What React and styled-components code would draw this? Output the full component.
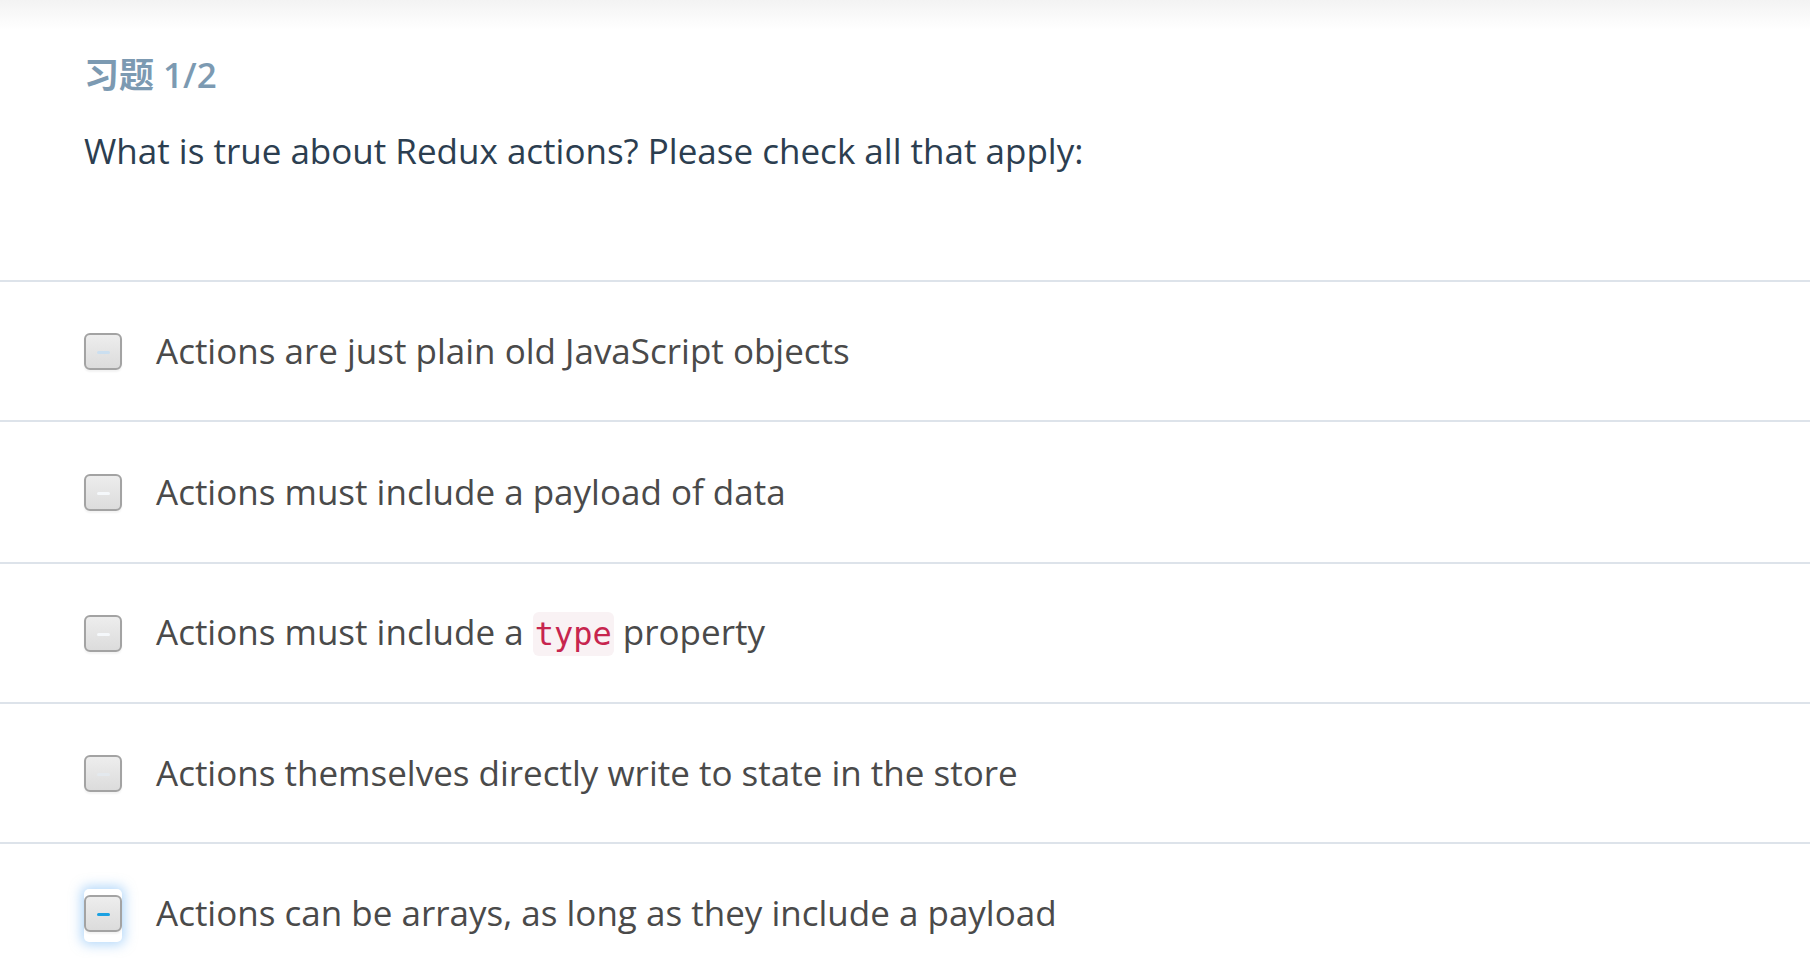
import React from "react";
import styled, { createGlobalStyle } from "styled-components";

const Global = createGlobalStyle`
  html, body { margin: 0; padding: 0; background: #ffffff; }
  body { font-family: "Open Sans", "Noto Sans CJK SC", sans-serif; overflow: hidden; }
`;

const Page = styled.div`
  width: 1810px;
  height: 958px;
  overflow: hidden;
  background: #fff;
`;

const TopShade = styled.div`
  height: 30px;
  background: linear-gradient(#f3f3f3, #ffffff);
`;

const Header = styled.header`
  padding: 25px 0 105px 84px;
`;

const Title = styled.h2`
  margin: 0;
  font-family: "Open Sans", "Noto Sans CJK SC", sans-serif;
  font-size: 35px;
  line-height: 40px;
  font-weight: 600;
  color: #7c9ab2;
`;

const Question = styled.p`
  margin: 32px 0 0;
  font-size: 35px;
  line-height: 48px;
  color: #2c3e50;
  font-weight: 400;
`;

const List = styled.ul`
  list-style: none;
  margin: 0;
  padding: 0;
`;

const Row = styled.li`
  height: ${(p) => p.$h - 2}px;
  border-top: 2px solid #dde3ea;
  display: flex;
  align-items: center;
  padding-left: 84px;
  gap: 34px;
`;

const Focus = styled.span`
  display: inline-flex;
  padding: 6px 0 10px;
  margin: -6px 0 -10px;
  border-radius: 5px;
  background: #fff;
  box-shadow: 0 0 12px 3px rgba(110, 180, 245, 0.5);
`;

const Box = styled.span`
  box-sizing: border-box;
  width: 38px;
  height: 37px;
  border: 2px solid #a3a3a3;
  border-radius: 6px;
  background: linear-gradient(#ededed, #dcdcdc);
  box-shadow: 0 2px 2px rgba(0, 0, 0, 0.05);
  display: flex;
  align-items: center;
  justify-content: center;
  flex-shrink: 0;
  &::after {
    content: "";
    width: 13px;
    height: 3px;
    border-radius: 2px;
    margin-top: 2px;
    background: ${(p) => p.$dash};
  }
`;

const Label = styled.span`
  font-size: 35px;
  line-height: 48px;
  color: #4a4a4a;
`;

const Code = styled.code`
  font-family: "DejaVu Sans Mono", monospace;
  font-size: 32px;
  color: #c7254e;
  background: #f9f2f4;
  border-radius: 6px;
  padding: 3px 2px;
`;

const options = [
  { text: "Actions are just plain old JavaScript objects", dash: "#cbdff0", h: 140 },
  { text: "Actions must include a payload of data", dash: "#f5f8fb", h: 142 },
  { text: ["Actions must include a ", "type", " property"], dash: "#f5f8fb", h: 140 },
  { text: "Actions themselves directly write to state in the store", dash: "#e4e9ee", h: 140 },
  { text: "Actions can be arrays, as long as they include a payload", dash: "#1ba1e2", focus: true, h: 140 },
];

export default function App() {
  return (
    <Page>
      <Global />
      <TopShade />
      <Header>
        <Title>习题 1/2</Title>
        <Question>What is true about Redux actions? Please check all that apply:</Question>
      </Header>
      <List>
        {options.map((o, i) => {
          const box = <Box $dash={o.dash} />;
          return (
            <Row key={i} $h={o.h}>
              {o.focus ? <Focus>{box}</Focus> : box}
              <Label>
                {Array.isArray(o.text) ? (
                  <>
                    {o.text[0]}
                    <Code>{o.text[1]}</Code>
                    {o.text[2]}
                  </>
                ) : (
                  o.text
                )}
              </Label>
            </Row>
          );
        })}
      </List>
    </Page>
  );
}
